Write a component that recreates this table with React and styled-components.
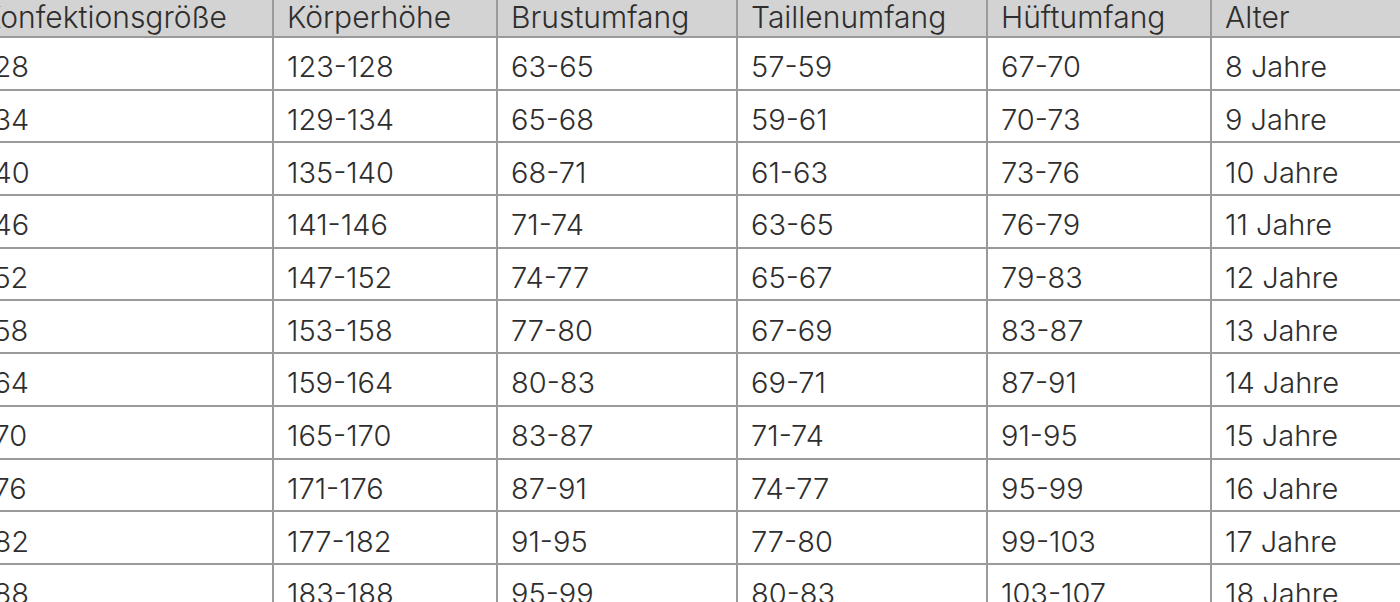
import { createGlobalStyle, styled } from 'styled-components';

const GlobalStyle = createGlobalStyle`
  html, body {
    margin: 0;
    padding: 0;
    background: #ffffff;
    overflow: hidden;
  }
  body {
    font-family: Inter, "Noto Sans", sans-serif;
  }
`;

const Page = styled.div`
  width: 1400px;
  height: 602px;
  overflow: hidden;
`;

const SizeTable = styled.table`
  border-collapse: collapse;
  table-layout: fixed;
  width: ${(p) => p.$width}px;
  margin-left: -33px;
  margin-top: -14px;
  color: #2e2e2e;
  font-size: 29px;
  font-weight: 300;
`;

const HeadCell = styled.th`
  background: #d3d3d3;
  border: 2px solid #9a9a9a;
  height: 39px;
  padding: 9px 13px 0;
  text-align: left;
  font-size: 30px;
  font-weight: 300;
  white-space: nowrap;
  overflow: hidden;
`;

const Cell = styled.td`
  border: 2px solid #9a9a9a;
  height: 43.7px;
  padding: 7px 13px 0;
  text-align: left;
  white-space: nowrap;
  overflow: hidden;
`;

const columns = [
  { title: 'Konfektionsgröße', width: 305 },
  { title: 'Körperhöhe', width: 224 },
  { title: 'Brustumfang', width: 240 },
  { title: 'Taillenumfang', width: 250 },
  { title: 'Hüftumfang', width: 224 },
  { title: 'Alter', width: 240 },
];

const rows = [
  ['128', '123-128', '63-65', '57-59', '67-70', '8 Jahre'],
  ['134', '129-134', '65-68', '59-61', '70-73', '9 Jahre'],
  ['140', '135-140', '68-71', '61-63', '73-76', '10 Jahre'],
  ['146', '141-146', '71-74', '63-65', '76-79', '11 Jahre'],
  ['152', '147-152', '74-77', '65-67', '79-83', '12 Jahre'],
  ['158', '153-158', '77-80', '67-69', '83-87', '13 Jahre'],
  ['164', '159-164', '80-83', '69-71', '87-91', '14 Jahre'],
  ['170', '165-170', '83-87', '71-74', '91-95', '15 Jahre'],
  ['176', '171-176', '87-91', '74-77', '95-99', '16 Jahre'],
  ['182', '177-182', '91-95', '77-80', '99-103', '17 Jahre'],
  ['188', '183-188', '95-99', '80-83', '103-107', '18 Jahre'],
];

const tableWidth = columns.reduce((sum, c) => sum + c.width, 0);

const App = () => (
  <Page>
    <GlobalStyle />
    <SizeTable $width={tableWidth}>
      <colgroup>
        {columns.map((c) => (
          <col key={c.title} style={{ width: c.width }} />
        ))}
      </colgroup>
      <thead>
        <tr>
          {columns.map((c) => (
            <HeadCell key={c.title}>{c.title}</HeadCell>
          ))}
        </tr>
      </thead>
      <tbody>
        {rows.map((r) => (
          <tr key={r[0]}>
            {r.map((v, i) => (
              <Cell key={i}>{v}</Cell>
            ))}
          </tr>
        ))}
      </tbody>
    </SizeTable>
  </Page>
);

export default App;
